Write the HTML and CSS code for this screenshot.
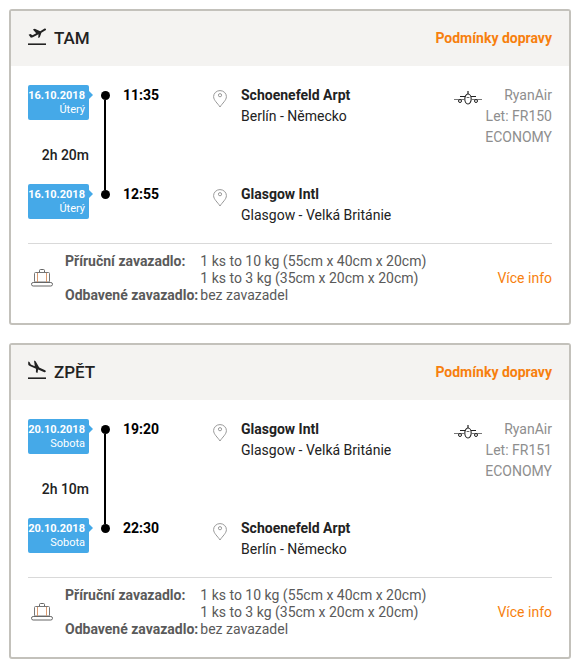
FILE: index.html
```html
<!DOCTYPE html>
<html lang="cs">
  <head>
    <meta charset="UTF-8" />
    <meta name="viewport" content="width=device-width, initial-scale=1.0" />
    <title>Letenky</title>
    <link rel="stylesheet" href="styles.css">
  </head>
  <body>
    <svg class="sprite" aria-hidden="true">
      <symbol id="takeoff" viewBox="0 0 18 20">
        <path d="M0 18.2h18" fill="none" stroke="currentColor" stroke-width="1.6" />
        <path d="M.6 8.800l1.800-.8 2.100 1.200 3.700-1.900-3.300-3.700 1.900-.8 5.400 2.500 4-2.500c.7-.5 1.500-.3 1.800.2.200.6-.2 1.200-.9 1.600l-3.700 2.200-1.600 4.400-1.600.8.300-3.700-5.700 3-1.900.4z" fill="currentColor" />
      </symbol>
      <symbol id="landing" viewBox="0 0 18 20">
        <path d="M0 18.2h18" fill="none" stroke="currentColor" stroke-width="1.6" />
        <path d="M.2 1.500l1.300.4 1.300 2.700 4 1.700L6 .6l1.600.6 3.600 6.400 5.400 2.300c.9.4 1.400 1.100 1.200 1.700-.3.700-1.100.8-2 .4l-5.700-2.400-.6 3.400-1.600-.7.100-3.500-6.200-2.800C.7 5.500.3 5 .2 4z" fill="currentColor" />
      </symbol>
      <symbol id="pin" viewBox="0 0 14 18">
        <path d="M7 17C4.600 13.200.6 10.300.6 6.600a6.400 6 0 0 1 12.800 0C13.400 10.300 9.400 13.200 7 17z" fill="none" stroke="currentColor" />
        <circle cx="7" cy="5.200" r="1.600" fill="none" stroke="currentColor" />
      </symbol>
      <symbol id="plane" viewBox="0 0 28 14">
        <path d="M0 8.500h10M18 8.500h10" stroke="#777" stroke-width="1.200" />
        <path d="M6 5.500h5M17 5.500h5M14 0v3" stroke="#222" stroke-width="1.200" />
        <ellipse cx="14" cy="8" rx="3.200" ry="5" fill="#fff" stroke="#222" stroke-width="1.100" />
        <path d="M12.600 6.500h2.800" stroke="#666" />
        <circle cx="6" cy="10" r="1.500" fill="#fff" stroke="#222" />
        <circle cx="22" cy="10" r="1.500" fill="#fff" stroke="#222" />
      </symbol>
      <symbol id="luggage" viewBox="0 0 22 18">
        <path d="M8.500 3.500v-2q0-1 1-1h3q1 0 1 1v2" fill="none" stroke="#666" />
        <rect x="3.500" y="3.500" width="15" height="9.500" rx="1" fill="#fff" stroke="#777" />
        <path d="M6.500 4v9M15.500 4v9" stroke="#d99a70" />
        <rect x=".5" y="13.500" width="21" height="3.500" rx="1.700" fill="#fff" stroke="#666" />
      </symbol>
    </svg>

    <section class="flight">
      <header class="flight-header">
        <h2><svg class="icon-direction"><use href="#takeoff" /></svg>TAM</h2>
        <a class="terms" href="#">Podmínky dopravy</a>
      </header>
      <div class="flight-body">
        <div class="route">
          <div class="legs">
            <div class="date"><strong>16.10.2018</strong><span>Úterý</span></div>
            <div class="rail"><i></i><b></b><i></i></div>
            <time class="time">11:35</time>
            <svg class="icon-pin"><use href="#pin" /></svg>
            <div class="place"><strong>Schoenefeld Arpt</strong><span>Berlín - Německo</span></div>
            <div class="duration">2h 20m</div>
            <div class="date arrival"><strong>16.10.2018</strong><span>Úterý</span></div>
            <time class="time arrival">12:55</time>
            <svg class="icon-pin arrival"><use href="#pin" /></svg>
            <div class="place arrival"><strong>Glasgow Intl</strong><span>Glasgow - Velká Británie</span></div>
          </div>
          <div class="carrier">
            <svg class="icon-plane"><use href="#plane" /></svg>
            <div class="carrier-text"><span>RyanAir</span><span>Let: FR150</span><span>ECONOMY</span></div>
          </div>
        </div>
        <div class="baggage">
          <svg class="icon-luggage"><use href="#luggage" /></svg>
          <dl>
            <dt>Příruční zavazadlo:</dt>
            <dd>1 ks to 10 kg (55cm x 40cm x 20cm)<br>1 ks to 3 kg (35cm x 20cm x 20cm)</dd>
            <dt>Odbavené zavazadlo:</dt>
            <dd>bez zavazadel</dd>
          </dl>
          <a class="more" href="#">Více info</a>
        </div>
      </div>
    </section>

    <section class="flight">
      <header class="flight-header">
        <h2><svg class="icon-direction"><use href="#landing" /></svg>ZPĚT</h2>
        <a class="terms" href="#">Podmínky dopravy</a>
      </header>
      <div class="flight-body">
        <div class="route">
          <div class="legs">
            <div class="date"><strong>20.10.2018</strong><span>Sobota</span></div>
            <div class="rail"><i></i><b></b><i></i></div>
            <time class="time">19:20</time>
            <svg class="icon-pin"><use href="#pin" /></svg>
            <div class="place"><strong>Glasgow Intl</strong><span>Glasgow - Velká Británie</span></div>
            <div class="duration">2h 10m</div>
            <div class="date arrival"><strong>20.10.2018</strong><span>Sobota</span></div>
            <time class="time arrival">22:30</time>
            <svg class="icon-pin arrival"><use href="#pin" /></svg>
            <div class="place arrival"><strong>Schoenefeld Arpt</strong><span>Berlín - Německo</span></div>
          </div>
          <div class="carrier">
            <svg class="icon-plane"><use href="#plane" /></svg>
            <div class="carrier-text"><span>RyanAir</span><span>Let: FR151</span><span>ECONOMY</span></div>
          </div>
        </div>
        <div class="baggage">
          <svg class="icon-luggage"><use href="#luggage" /></svg>
          <dl>
            <dt>Příruční zavazadlo:</dt>
            <dd>1 ks to 10 kg (55cm x 40cm x 20cm)<br>1 ks to 3 kg (35cm x 20cm x 20cm)</dd>
            <dt>Odbavené zavazadlo:</dt>
            <dd>bez zavazadel</dd>
          </dl>
          <a class="more" href="#">Více info</a>
        </div>
      </div>
    </section>
  </body>
</html>
```
FILE: styles.css
```css
* {
  box-sizing: border-box;
}
body {
  margin: 0;
  padding: 9px 5px 8px 9px;
  display: flex;
  flex-direction: column;
  gap: 18px;
  background: #fff;
  color: #222;
  font-family: Roboto, sans-serif;
  font-size: 14px;
  line-height: 21px;
}
a {
  color: #f77f0e;
  text-decoration: none;
}
a:hover {
  text-decoration: underline;
}
strong,
span {
  display: block;
}
.sprite {
  display: none;
}
.flight {
  border: 2px solid #c3c1bb;
  border-radius: 3px;
}
.flight-header {
  display: flex;
  justify-content: space-between;
  align-items: center;
  height: 55px;
  padding: 0 17px;
  background: #f4f3f1;
}
.flight-header h2 {
  display: flex;
  align-items: center;
  gap: 8px;
  margin: 0;
  font-size: 17px;
  font-weight: 500;
}
.icon-direction {
  width: 18px;
  height: 20px;
  margin-bottom: 6px;
}
.terms {
  font-weight: bold;
}
.flight-body {
  padding: 19px 17px;
}
.route {
  display: flex;
  justify-content: space-between;
  padding-bottom: 17px;
  border-bottom: 1px solid #d9d9d9;
}
.legs {
  display: grid;
  grid-template-columns: 61px 32px 92px 28px auto;
  grid-template-rows: 42px 57px 42px;
}
.arrival {
  grid-row: 3;
}
.date {
  position: relative;
  grid-column: 1;
  align-self: start;
  padding: 4px 4px 3px 0;
  border-radius: 2px;
  background: #45a9e8;
  color: #fff;
  font-size: 11px;
  line-height: 14px;
  text-align: right;
  white-space: nowrap;
}
.date::after {
  content: "";
  position: absolute;
  top: 6px;
  left: 100%;
  border: 4px solid transparent;
  border-left-color: #45a9e8;
  border-right: 0;
}
.rail {
  grid-column: 2;
  grid-row: 1 / 4;
  display: flex;
  flex-direction: column;
  align-items: center;
  padding: 6px 0 27px;
}
.rail i {
  width: 9px;
  height: 9px;
  border-radius: 50%;
  background: #000;
}
.rail b {
  flex: 1;
  width: 2px;
  background: #000;
}
.time {
  grid-column: 3;
  padding-left: 2px;
  color: #000;
  font-weight: bold;
}
.icon-pin {
  grid-column: 4;
  width: 14px;
  height: 18px;
  margin-top: 5px;
  color: #999;
}
.place {
  grid-column: 5;
}
.duration {
  grid-column: 1;
  grid-row: 2;
  align-self: center;
  text-align: right;
  font-weight: 500;
}
.carrier {
  display: flex;
  color: #8e8e8e;
  text-align: right;
}
.icon-plane {
  width: 28px;
  height: 14px;
  margin: 6px -28px 0 0;
}
.carrier-text {
  width: 98px;
}
.baggage {
  display: flex;
  align-items: center;
  padding-top: 9px;
  color: #5a5a5a;
  line-height: 17px;
}
.icon-luggage {
  width: 22px;
  height: 18px;
  margin: 0 12px 2px 3px;
}
.baggage dl {
  display: grid;
  grid-template-columns: auto auto;
  column-gap: 2px;
  margin: 0;
}
.baggage dt {
  font-weight: bold;
}
.baggage dd {
  margin: 0;
}
.more {
  margin-left: auto;
}
```
